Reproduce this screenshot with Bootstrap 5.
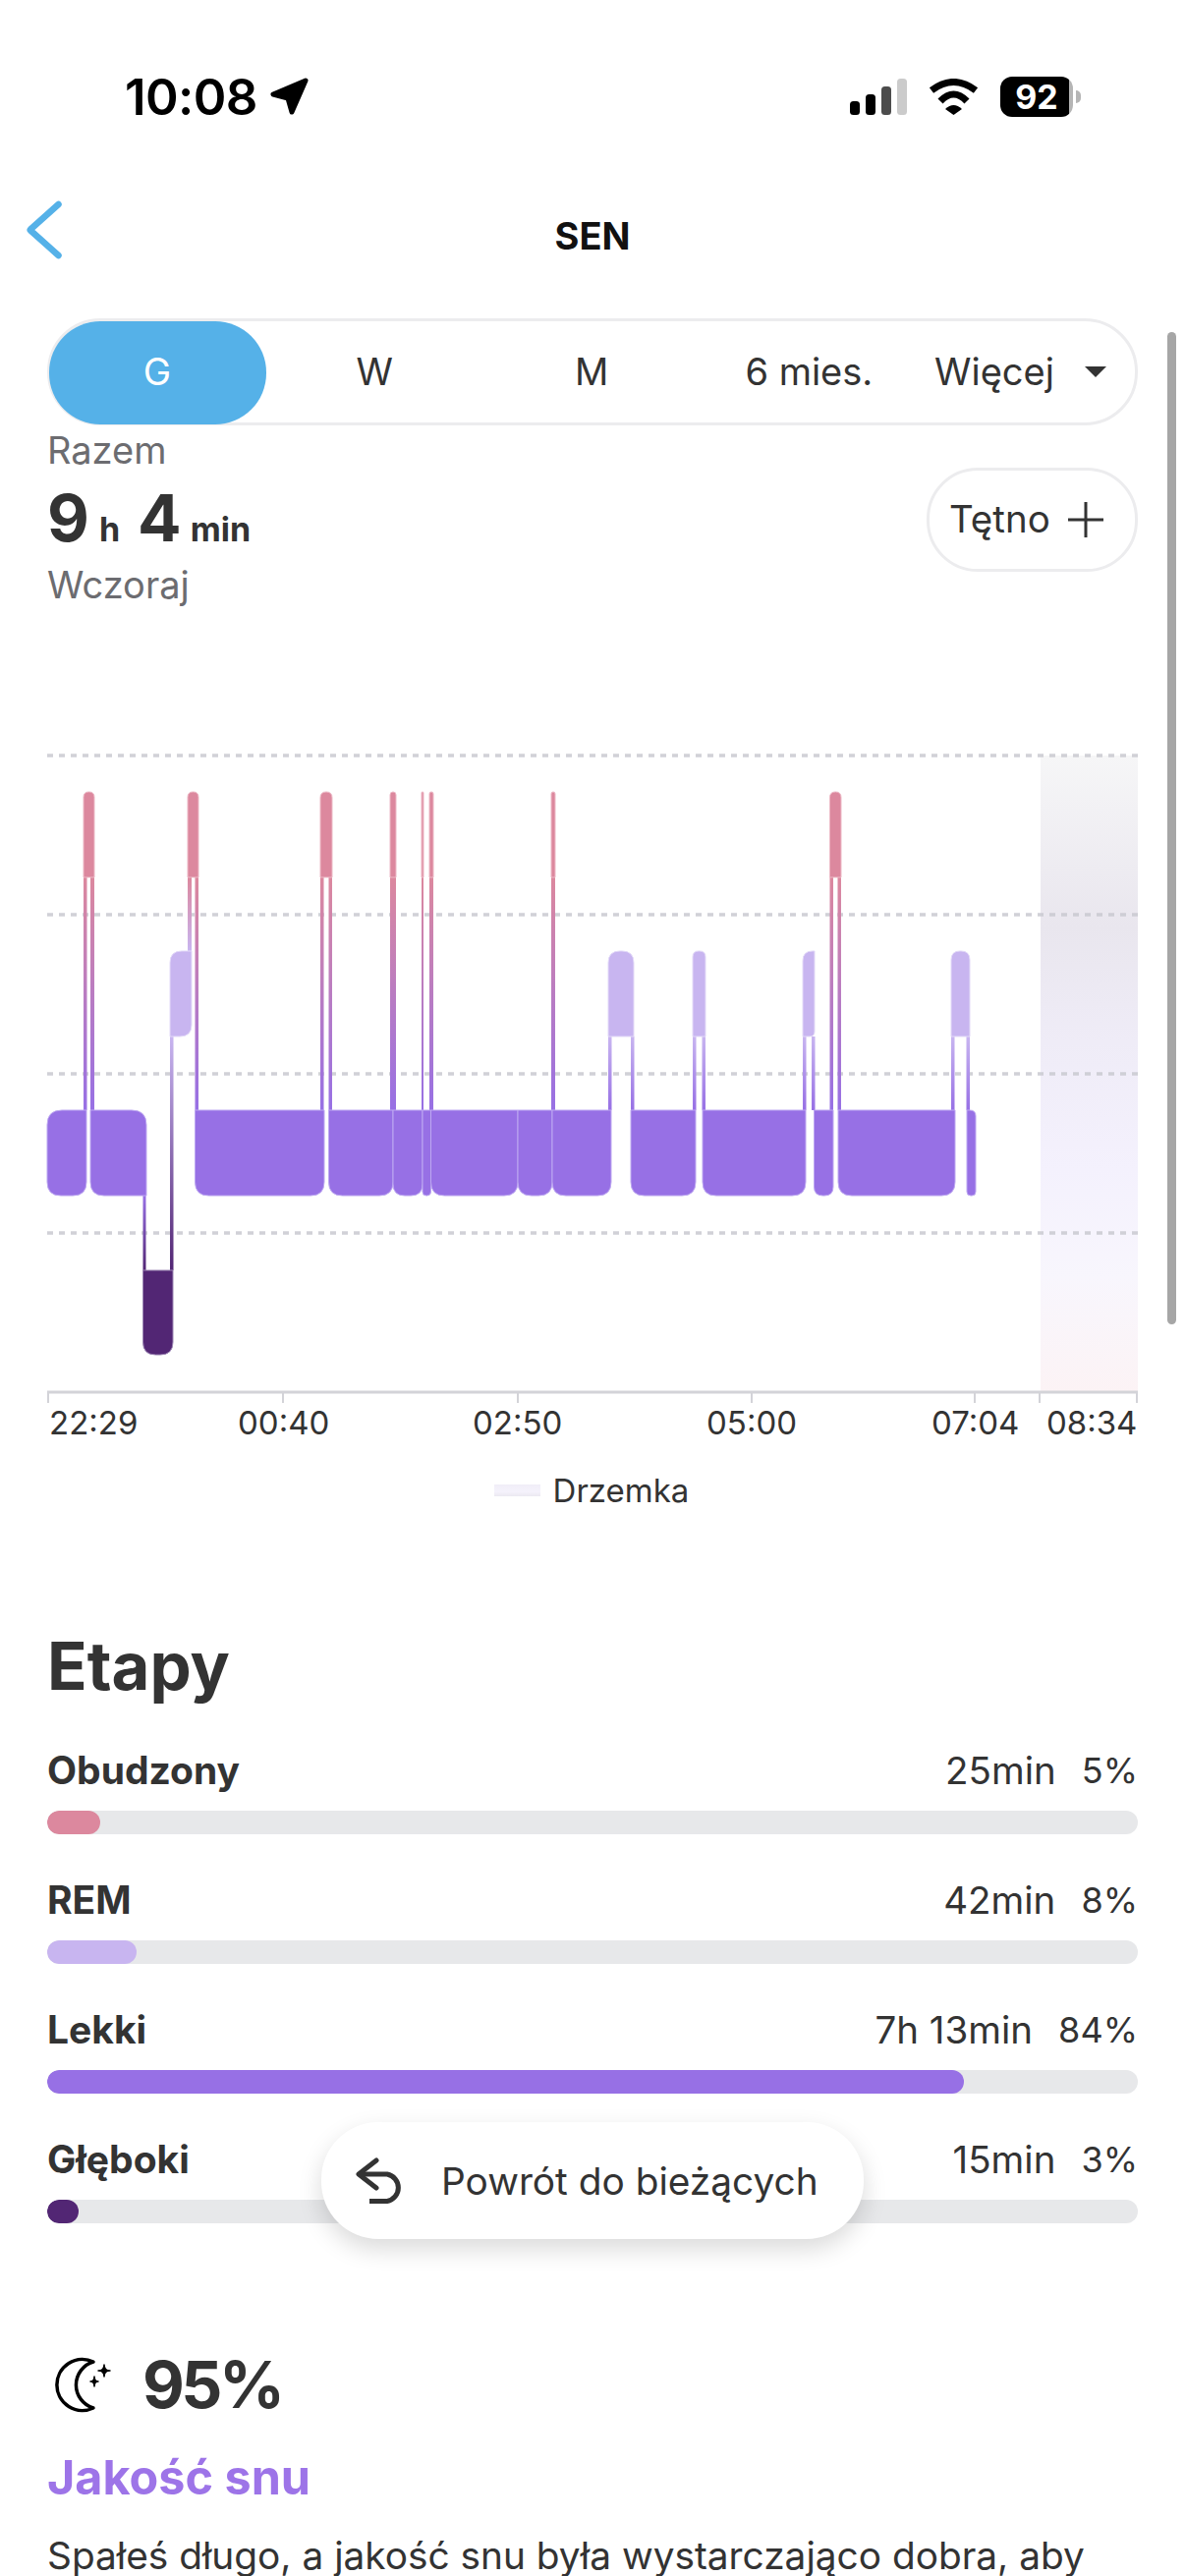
<!DOCTYPE html>
<html lang="pl">
<head>
    <meta charset="UTF-8">
    <meta name="viewport" content="width=device-width, initial-scale=1.0">
    <title>Sen</title>
    <link rel="stylesheet" href="https://cdn.jsdelivr.net/npm/bootstrap@5.3.0/dist/css/bootstrap.min.css">
    <script defer src="https://cdn.jsdelivr.net/npm/bootstrap@5.3.0/dist/js/bootstrap.bundle.min.js"></script>
    <style>
        html, body { height: 2622px; overflow: hidden; }
        body { position: relative; background: #fff; color: #333; font-family: Inter, "Liberation Sans", sans-serif; font-size: 38px; line-height: 50px; }

        /* Status bar */
        .status-bar { height: 196px; padding: 0 106px 0 127px; color: #000; }
        .status-time { font-size: 51px; font-weight: 600; letter-spacing: -.6px; line-height: 1; }
        .status-gap { gap: 13px; }
        .wifi-icon { margin: 0 22px; }
        .batt-body { width: 74px; height: 41px; border-radius: 12px; background: linear-gradient(90deg, #000 94%, #b5b5b5 94%); color: #fff; font-size: 34px; font-weight: 700; line-height: 41px; text-align: center; }
        .batt-nub { width: 5px; height: 13px; margin-left: 3px; border-radius: 0 7px 7px 0; background: #b5b5b5; }

        /* Title bar */
        .title-bar { height: 87px; padding-left: 27px; }
        .title-side { width: 120px; }
        .back-icon { margin-bottom: 11px; }
        .title-text { margin-right: 147px; font-size: 38px; font-weight: 700; color: #111; }

        .page-pad { padding: 0 48px; }

        /* Range selector */
        .range-tabs { margin: 41px 48px 0; height: 109px; border: 3px solid #ececee; border-radius: 54px; flex-wrap: nowrap; }
        .range-tabs .nav-link { width: 222px; height: 105px; padding: 0 0 3px; display: flex; align-items: center; justify-content: center; color: #333; border-radius: 52px; white-space: nowrap; }
        .range-tabs .nav-link:first-child { margin-left: -1.5px; }
        .range-tabs .nav-link.active { background: #55b1e8; color: #fff; }
        .range-tabs .dropdown-toggle { padding-right: 12px; }
        .range-tabs .dropdown-toggle::after { margin-left: 31px; }

        /* Summary */
        .muted-text { color: #6c6c70; }
        .sum-value { margin-top: 11px; height: 66px; line-height: 66px; font-size: 66px; font-weight: 700; }
        .sum-value small { font-size: 34px; font-weight: 700; }
        .sum-value .unit-h { margin: 0 18px 0 10px; }
        .sum-value .unit-m { margin-left: 9px; }
        .sum-date { margin-top: 10px; }
        .hr-btn { margin-top: 43px; width: 215px; height: 106px; padding: 0 32px 0 20px; background: #fff; border: 3px solid #ececee; border-radius: 52px; color: #333; font-size: 38.500px; }

        /* Chart */
        .chart-svg { display: block; margin-top: 120px; }
        .axis-label { font-family: Inter, "Liberation Sans", sans-serif; font-size: 33px; fill: #333; }
        .nap-legend { margin-top: 17px; height: 40px; padding-right: 2px; line-height: 40px; font-size: 33px; gap: 13px; }
        .nap-swatch { width: 47px; height: 12px; background: linear-gradient(180deg, #f0eef7, #f5f2fc 60%, #ebe9f1); }

        /* Stages */
        .stage-title { margin-top: 119px; height: 80px; line-height: 80px; font-size: 67px; font-weight: 700; margin-bottom: 41px; }
        .stage-row { margin-bottom: 42px; }
        .stage-name { font-weight: 700; font-size: 39px; }
        .stage-vals { gap: 26px; font-size: 38.500px; }
        .stage-pct { font-size: 36px; }
        .stage-track { height: 24px; margin-top: 16px; background: #e7e8ea; border-radius: 12px; }
        .stage-track .progress-bar { border-radius: 12px; }
        .fill-awake { background: #dc889e; }
        .fill-rem { background: #c8b5f0; }
        .fill-light { background: #9770e5; }
        .fill-deep { background: #522674; }

        /* Quality */
        .quality-row { margin-top: 129px; height: 70px; gap: 31px; }
        .moon-icon { margin-left: 4px; }
        .quality-pct { font-size: 66px; font-weight: 700; line-height: 70px; letter-spacing: -3.500px; }
        .quality-title { margin-top: 30px; height: 60px; line-height: 60px; font-size: 48.500px; font-weight: 700; color: #9d74e8; }
        .quality-text { margin-top: 24px; font-size: 38.800px; white-space: nowrap; }

        /* Floating bits */
        .back-pill { top: 2160px; left: 327px; width: 552px; height: 119px; padding-left: 35px; gap: 36px; background: #fff; border-radius: 58px; box-shadow: 0 10px 24px rgba(0, 0, 0, .15); font-size: 38.800px; white-space: nowrap; }
        .scroll-thumb { top: 338px; left: 1188px; width: 9px; height: 1010px; background: #a6a6a6; border-radius: 5px; }
    </style>
</head>

<body>
    <div class="status-bar d-flex justify-content-between align-items-center">
        <div class="d-flex align-items-center status-gap">
            <span class="status-time">10:08</span>
            <svg width="40" height="38" viewBox="0 0 40 38"><path d="M36 3 3 17 18 21 22 35Z" fill="#000" stroke="#000" stroke-width="5" stroke-linejoin="round"/></svg>
        </div>
        <div class="d-flex align-items-center">
            <svg width="58" height="37" viewBox="0 0 58 37">
                <rect x="0" y="23" width="10" height="14" rx="3.5"/>
                <rect x="16" y="16" width="10" height="21" rx="3.5"/>
                <rect x="32" y="8" width="10" height="29" rx="3.5" fill="#4c4c4c"/>
                <rect x="48" y="0" width="10" height="37" rx="3.5" fill="#cbcbcb"/>
            </svg>
            <svg class="wifi-icon" width="51" height="37" viewBox="0 0 51 37">
                <path d="M3 12Q25.500-5 48 12" fill="none" stroke="#000" stroke-width="7"/>
                <path d="M12 23Q25.500 9 39 23" fill="none" stroke="#000" stroke-width="7"/>
                <path d="M17 31Q25.500 23 34 31L25.500 37Z"/>
            </svg>
            <div class="batt-body">92</div>
            <div class="batt-nub"></div>
        </div>
    </div>

    <div class="title-bar d-flex align-items-center">
        <div class="title-side">
            <svg class="d-block back-icon" width="38" height="60" viewBox="0 0 38 60"><path d="M32.500 4 4 29.500Q3.500 30 4 30.500L32.500 56" fill="none" stroke="#55b1e8" stroke-width="6.500" stroke-linecap="round" stroke-linejoin="round"/></svg>
        </div>
        <div class="flex-grow-1 text-center title-text">SEN</div>
    </div>

    <div class="nav nav-pills range-tabs">
        <a class="nav-link active" href="#">G</a>
        <a class="nav-link" href="#">W</a>
        <a class="nav-link" href="#">M</a>
        <a class="nav-link" href="#">6 mies.</a>
        <a class="nav-link dropdown-toggle" href="#">Więcej</a>
    </div>

    <div class="page-pad d-flex justify-content-between align-items-start">
        <div>
            <div class="muted-text">Razem</div>
            <div class="sum-value">9<small class="unit-h">h</small>4<small class="unit-m">min</small></div>
            <div class="muted-text sum-date">Wczoraj</div>
        </div>
        <button type="button" class="btn hr-btn d-flex justify-content-between align-items-center">
            <span>Tętno</span>
            <svg width="36" height="36" viewBox="0 0 36 36"><path d="M18 0V36M0 18H36" stroke="#333" stroke-width="3"/></svg>
        </button>
    </div>

    <svg id="sleep-chart" class="chart-svg" width="1206" height="740" viewBox="0 740 1206 740"></svg>

    <div class="nap-legend d-flex justify-content-center align-items-center">
        <span class="nap-swatch"></span><span>Drzemka</span>
    </div>

    <div class="page-pad">
        <div class="stage-title">Etapy</div>

        <div class="stage-row">
            <div class="d-flex justify-content-between"><span class="stage-name">Obudzony</span><span class="stage-vals d-flex"><span>25min</span><span class="stage-pct">5%</span></span></div>
            <div class="progress stage-track"><div class="progress-bar fill-awake" style="width:4.9%"></div></div>
        </div>
        <div class="stage-row">
            <div class="d-flex justify-content-between"><span class="stage-name">REM</span><span class="stage-vals d-flex"><span>42min</span><span class="stage-pct">8%</span></span></div>
            <div class="progress stage-track"><div class="progress-bar fill-rem" style="width:8.2%"></div></div>
        </div>
        <div class="stage-row">
            <div class="d-flex justify-content-between"><span class="stage-name">Lekki</span><span class="stage-vals d-flex"><span>7h 13min</span><span class="stage-pct">84%</span></span></div>
            <div class="progress stage-track"><div class="progress-bar fill-light" style="width:84.05%"></div></div>
        </div>
        <div class="stage-row mb-0">
            <div class="d-flex justify-content-between"><span class="stage-name">Głęboki</span><span class="stage-vals d-flex"><span>15min</span><span class="stage-pct">3%</span></span></div>
            <div class="progress stage-track"><div class="progress-bar fill-deep" style="width:2.9%"></div></div>
        </div>

        <div class="quality-row d-flex align-items-center">
            <svg class="moon-icon" width="62" height="58" viewBox="0 0 62 58">
                <path d="M43 6A26 26 0 1 0 43 53 24.500 24.500 0 0 1 43 6Z" fill="none" stroke="#000" stroke-width="3.500" stroke-linejoin="round"/>
                <path d="M54 9Q54 15 60 15 54 15 54 21 54 15 48 15 54 15 54 9Z" stroke="#000" stroke-width="1.500" stroke-linejoin="round"/>
                <path d="M44 21Q44 26 48 26 44 26 44 31 44 26 40 26 44 26 44 21Z" stroke="#000" stroke-width="1.500" stroke-linejoin="round"/>
            </svg>
            <span class="quality-pct">95%</span>
        </div>
        <div class="quality-title">Jakość snu</div>
        <div class="quality-text">Spałeś długo, a jakość snu była wystarczająco dobra, aby</div>
    </div>

    <div class="back-pill position-absolute d-flex align-items-center">
        <svg width="51" height="47" viewBox="0 0 51 47"><path d="M21 3 3 17 21 31" fill="none" stroke="#333" stroke-width="5" stroke-linecap="round" stroke-linejoin="round"/><path d="M3 17H32A14 14 0 0 1 32 44.500H14" fill="none" stroke="#333" stroke-width="5"/></svg>
        <span>Powrót do bieżących</span>
    </div>

    <div class="scroll-thumb position-absolute"></div>

    <script>
        // Sleep hypnogram, coordinates are page pixels (see the viewBox)
        const rows = { wake: [806, 893], rem: [968, 1055], light: [1130, 1217], deep: [1293, 1379] };
        const colors = { wake: "#dc889e", rem: "#c8b5f0", light: "#9770e5", deep: "#522674" };
        const edges = { wake: "#edb9c6", rem: "#e3daf8", light: "#bda8f1", deep: "#9c86b4" };

        function box(x0, x1, y0, y1, tl, tr, br, bl) {
            return "M" + (x0 + tl) + " " + y0 + "H" + (x1 - tr) + "Q" + x1 + " " + y0 + " " + x1 + " " + (y0 + tr) +
                "V" + (y1 - br) + "Q" + x1 + " " + y1 + " " + (x1 - br) + " " + y1 + "H" + (x0 + bl) +
                "Q" + x0 + " " + y1 + " " + x0 + " " + (y1 - bl) + "V" + (y0 + tl) + "Q" + x0 + " " + y0 + " " + (x0 + tl) + " " + y0 + "Z";
        }

        function seg(type, x0, x1, tl, tr, br, bl) {
            return '<path d="' + box(x0, x1, rows[type][0], rows[type][1], tl, tr, br, bl) + '" fill="' + colors[type] + '" stroke="' + edges[type] + '" stroke-width="1"/>';
        }

        const blends = [["wl", "wake", "light", 893, 1130], ["wr", "wake", "rem", 893, 968], ["rl", "rem", "light", 1055, 1130], ["rd", "rem", "deep", 1055, 1293], ["ld", "light", "deep", 1217, 1293]];
        let svg = "<defs>";
        blends.forEach(b => {
            svg += '<linearGradient id="' + b[0] + '" gradientUnits="userSpaceOnUse" x1="0" x2="0" y1="' + b[3] + '" y2="' + b[4] + '"><stop offset="0" stop-color="' + colors[b[1]] + '"/><stop offset="1" stop-color="' + colors[b[2]] + '"/></linearGradient>';
        });
        svg += '<linearGradient id="nap" x1="0" x2="0" y1="0" y2="1"><stop offset="0" stop-color="#f6f6f7"/><stop offset=".27" stop-color="#e9e6ee"/><stop offset=".45" stop-color="#efecf7"/><stop offset=".65" stop-color="#f4f1fd"/><stop offset=".82" stop-color="#f8f6fd"/><stop offset="1" stop-color="#fcf3f5"/></linearGradient></defs>';

        // nap area and grid
        svg += '<rect x="1059" y="769" width="99" height="648" fill="url(#nap)"/>';
        [769, 931, 1093, 1255].forEach(y => {
            svg += '<line x1="48" x2="1158" y1="' + y + '" y2="' + y + '" stroke="#c9c9d0" stroke-opacity=".85" stroke-width="3.500" stroke-dasharray="6 6"/>';
        });

        // links between stages: x, width, gradient
        [[85, 3.5], [92, 4], [198.5, 3.5], [326, 3.5], [334.5, 3.5], [397, 6], [429, 2], [437, 4], [561, 4], [844.5, 3.5], [852.5, 3.5]]
            .forEach(l => { svg += '<rect x="' + l[0] + '" y="893" width="' + l[1] + '" height="237" fill="url(#wl)"/>'; });
        svg += '<rect x="191" y="893" width="4" height="75" fill="url(#wr)"/>';
        [619, 642, 705, 714.5, 817, 826, 968, 983.5].forEach(x => {
            svg += '<rect x="' + x + '" y="1055" width="3.500" height="75" fill="url(#rl)"/>';
        });
        svg += '<rect x="173" y="1055" width="3.500" height="238" fill="url(#rd)"/>';
        svg += '<rect x="145.500" y="1217" width="3" height="76" fill="url(#ld)"/>';

        // light sleep: x0, x1, corners
        [[48, 88, 15, 0, 14, 14], [92, 149, 0, 15, 0, 14], [198.5, 330, 0, 0, 14, 14], [334.5, 400, 0, 0, 14, 14], [400, 430, 0, 0, 12, 12],
         [430, 438.5, 0, 0, 4, 4], [438.5, 527, 0, 0, 14, 14], [527, 562, 0, 0, 14, 14], [562, 622, 0, 0, 14, 14], [642, 708, 0, 0, 14, 14],
         [715, 820, 0, 0, 14, 14], [828.5, 848, 0, 0, 9, 9], [853, 972, 0, 0, 14, 14], [984, 993, 0, 6, 4, 4]]
            .forEach(s => { svg += seg("light", s[0], s[1], s[2], s[3], s[4], s[5]); });

        // awake
        [[85, 96], [191, 202], [326, 338], [397, 403], [429, 431], [437, 441], [561, 565], [844.5, 856]].forEach(s => {
            const r = Math.min((s[1] - s[0]) / 2, 6);
            svg += seg("wake", s[0], s[1], r, r, 0, 0);
        });

        // REM
        [[173, 195, 12, 0, 12, 0], [619, 645, 12, 12, 0, 0], [705, 718, 6, 6, 0, 0], [817, 829, 10, 0, 5, 0], [968, 987, 9, 9, 0, 0]]
            .forEach(s => { svg += seg("rem", s[0], s[1], s[2], s[3], s[4], s[5]); });

        // deep
        svg += seg("deep", 145.5, 176, 0, 0, 13, 13);

        // axis
        svg += '<line x1="48" x2="1158" y1="1417" y2="1417" stroke="#d3d3d8" stroke-width="3"/>';
        [49, 288, 527, 765, 992, 1058, 1157].forEach(x => {
            svg += '<line x1="' + x + '" x2="' + x + '" y1="1417" y2="1428" stroke="#d3d3d8" stroke-width="2"/>';
        });
        [["22:29", 50], ["00:40", 242], ["02:50", 481], ["05:00", 719], ["07:04", 948], ["08:34", 1065]].forEach(t => {
            svg += '<text class="axis-label" x="' + t[1] + '" y="1460">' + t[0] + '</text>';
        });

        document.getElementById("sleep-chart").innerHTML = svg;
    </script>
</body>
</html>
